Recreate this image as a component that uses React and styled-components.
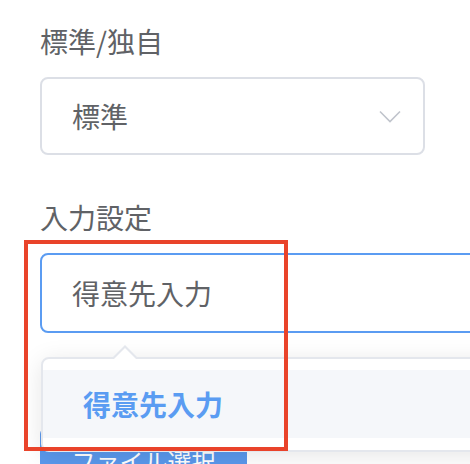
import React from "react"
import styled, { createGlobalStyle } from "styled-components"

const GlobalStyle = createGlobalStyle`
  html, body {
    margin: 0;
    padding: 0;
    background: #ffffff;
    overflow: hidden;
  }
  body {
    font-family: "Noto Sans CJK JP", "Noto Sans", sans-serif;
  }
`

const Page = styled.div`
  position: relative;
  width: 470px;
  height: 464px;
  overflow: hidden;
  padding: 21px 0 0 40px;
  box-sizing: border-box;
`

const FormItem = styled.div`
  position: relative;
  margin-bottom: ${p => p.$gap || 0}px;
`

const Label = styled.div`
  font-size: 28px;
  line-height: 40px;
  color: #606266;
  margin-bottom: 16px;
`

const SelectBox = styled.div`
  width: 385px;
  height: 78px;
  box-sizing: border-box;
  border: 2px solid #dcdfe6;
  border-radius: 8px;
  display: flex;
  align-items: center;
  justify-content: space-between;
  padding: 0 22px 0 30px;
  font-size: 28px;
  color: #606266;
`

const InputWrap = styled.div`
  position: relative;
  width: 460px;
`

const TextInput = styled.input`
  display: block;
  width: 100%;
  height: 80px;
  box-sizing: border-box;
  border: 2px solid #5b9cf2;
  border-radius: 8px;
  outline: none;
  padding: 0 30px;
  font-family: inherit;
  font-size: 28px;
  color: #606266;
  background: #fff;
`

const Popper = styled.div`
  position: absolute;
  z-index: 5;
  left: 1px;
  top: calc(100% + 24px);
  width: 100%;
  box-sizing: border-box;
  background: #fff;
  border: 2px solid #e4e7ed;
  border-radius: 8px;
  box-shadow: 0 4px 24px rgba(0, 0, 0, 0.1);
  padding: 11px 0 12px;

  &::before, &::after {
    content: "";
    position: absolute;
    left: 70px;
    width: 0;
    height: 0;
    border-style: solid;
    border-color: transparent;
    border-width: 0 12px 12px 12px;
  }
  &::before {
    top: -14px;
    border-bottom-color: #e4e7ed;
  }
  &::after {
    top: -11px;
    border-bottom-color: #fff;
  }
`

const Option = styled.div`
  height: 68px;
  line-height: 68px;
  padding: 0 40px;
  font-size: 28px;
  font-weight: 700;
  color: ${p => (p.$selected ? "#5a9cf2" : "#606266")};
  background: ${p => (p.$hover ? "#f5f7fa" : "#fff")};
`

const UploadButton = styled.button`
  width: 207px;
  height: 64px;
  margin-top: 95px;
  border: none;
  border-radius: 6px;
  background: #5a98ec;
  color: #fff;
  font-family: inherit;
  font-size: 24px;
  padding: 0;
`

const Highlight = styled.div`
  position: absolute;
  z-index: 10;
  left: 24px;
  top: 240px;
  width: 264px;
  height: 211px;
  box-sizing: border-box;
  border: 4px solid #e9432a;
  pointer-events: none;
`

const Chevron = () => (
  <svg width="22" height="13" viewBox="0 0 22 13">
    <path d="M1 1.5 L11 11.5 L21 1.5" fill="none" stroke="#c0c4cc" strokeWidth="1.6" />
  </svg>
)

const App = () => {
  return (
    <>
      <GlobalStyle />
      <Page>
        <FormItem $gap={42}>
          <Label>標準/独自</Label>
          <SelectBox>
            <span>標準</span>
            <Chevron />
          </SelectBox>
        </FormItem>
        <FormItem>
          <Label>入力設定</Label>
          <InputWrap>
            <TextInput type="text" readOnly value="得意先入力" />
            <Popper>
              <Option $selected $hover>得意先入力</Option>
            </Popper>
          </InputWrap>
        </FormItem>
        <UploadButton>ファイル選択</UploadButton>
        <Highlight />
      </Page>
    </>
  )
}

export default App
